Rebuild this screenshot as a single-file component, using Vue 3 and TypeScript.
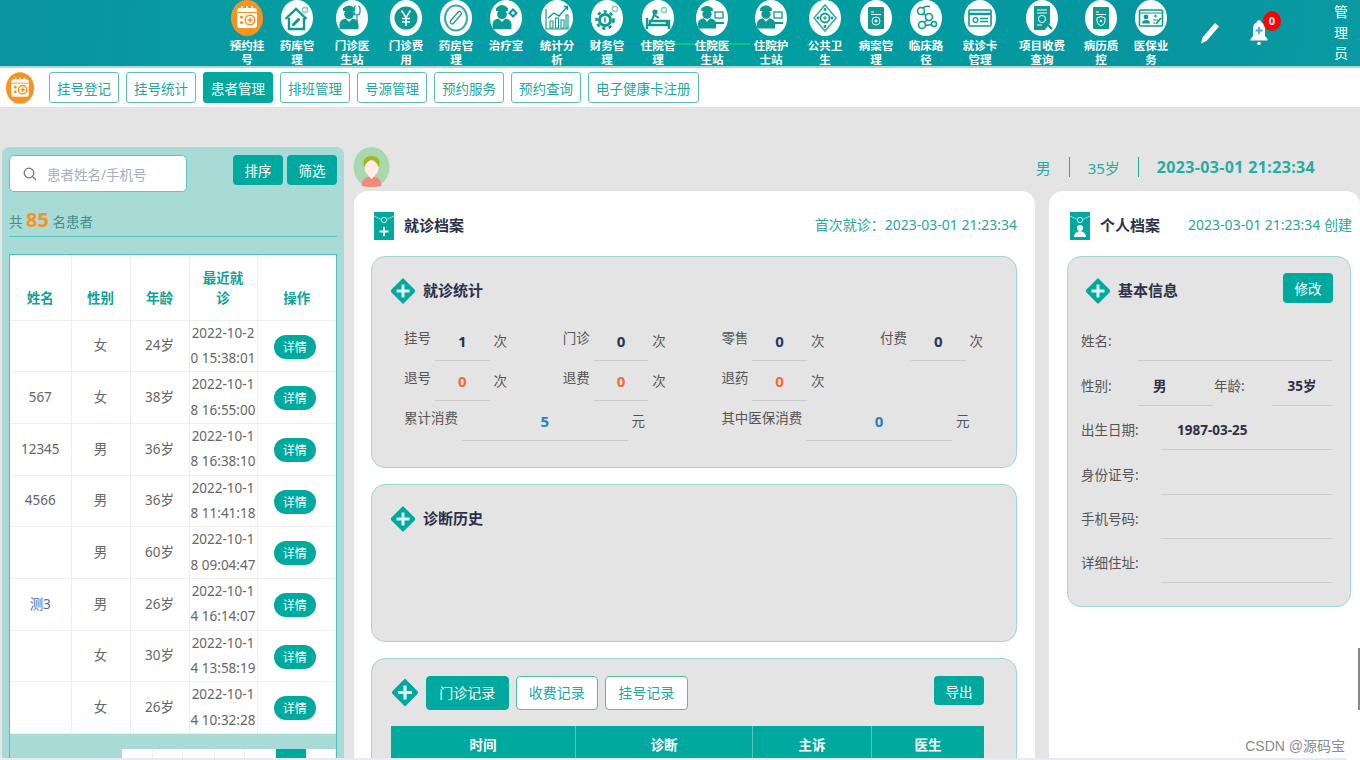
<script setup lang="ts">
const T = '#0b9a94'

// small building blocks for the round menu icons (viewBox 0 0 32 36)
const badge = (x: number, y: number, r = 3.4) =>
  `<circle cx="${x}" cy="${y}" r="${r}" fill="#8fd0cb"/><circle cx="${x}" cy="${y}" r="${r - 1.6}" fill="#fff"/>`
const staff = (x: number, y: number, k = 1.35, nurse = false) =>
  `<g transform="translate(${x} ${y}) scale(${k})" fill="${T}">` +
  `<path d="M-4.500 -2q4.500 -${nurse ? 5 : 4} 9 0v2h-9z"/>` +
  `<circle cx="0" cy="2.400" r="3.600"/>` +
  `<path d="M-7 13.500v-3.500q0 -3.600 4.500 -4.400l2.500 2.600 2.500 -2.600q4.500 .8 4.500 4.400v3.500z"/></g>`
const monitor = (x: number, y: number) =>
  `<rect x="${x}" y="${y}" width="8" height="6" fill="none" stroke="${T}" stroke-width="1.300"/><path d="M${x - 3} ${y + 10}h12v2h-12z" fill="${T}"/>`
const bookCard = (inner: string) =>
  `<rect x="8" y="7" width="16" height="22" rx="1" fill="${T}"/><path d="M11 12h3M11 14.500h10" stroke="#fff" stroke-width="1"/>` + inner

const menu = [
  { label: '预约挂号', shift: 0, active: true, svg: `<rect x="6" y="8" width="20" height="20" rx="3" fill="#fff"/><path d="M11 6v4M16 6v4M21 6v4" stroke="#fff" stroke-width="1.600"/><path d="M6 12.500h20" stroke="#f7931e" stroke-width="1"/><circle cx="10.500" cy="17" r="1.600" fill="#f7931e"/><circle cx="10.500" cy="22.500" r="1.600" fill="#f7931e"/><circle cx="19" cy="20" r="4.800" fill="none" stroke="#f7931e" stroke-width="1.600"/><path d="M19 17.500v5M16.500 20h5" stroke="#f7931e" stroke-width="1.500"/>` },
  { label: '药库管理', shift: 0, svg: `<path d="M4.500 19L15 9l10.500 10M8 18v11h15V18" fill="none" stroke="${T}" stroke-width="2.400"/><path d="M12.500 24.500l5 -5" stroke="${T}" stroke-width="3" stroke-linecap="round"/>` + badge(24, 10) },
  { label: '门诊医生站', shift: 5, svg: staff(13, 11, 1.35) + `<path d="M20 6q-2 0 -2 3v3q0 3 3 3t3 -3V9q0 -3 -2 -3M21 15v6q0 2 -2 2" fill="none" stroke="${T}" stroke-width="1.200"/>` },
  { label: '门诊费用', shift: 4, svg: `<circle cx="16" cy="18" r="11.500" fill="${T}"/><path d="M11.500 10.500l4.500 7 4.500 -7M16 17.500V26M12 18.500h8M12 22h8" fill="none" stroke="#fff" stroke-width="1.500"/>` },
  { label: '药房管理', shift: 0, svg: `<ellipse cx="16" cy="18" rx="11" ry="12.500" fill="none" stroke="#35aea8" stroke-width="2"/><path d="M12 22l7.500 -8.500" stroke="${T}" stroke-width="5" stroke-linecap="round"/><path d="M12 22l7.500 -8.500" stroke="#fff" stroke-width="2.600" stroke-linecap="round"/>` },
  { label: '治疗室', shift: 0, svg: staff(12, 11, 1.35, true) + `<path d="M23 8l5 5 -5 5 -5 -5z" fill="${T}"/><path d="M23 11v4M21 13h4" stroke="#fff" stroke-width="1"/>` },
  { label: '统计分析', shift: 1, svg: `<path d="M5 9v20h23" fill="none" stroke="${T}" stroke-width="1.200"/><path d="M9 21h3v7H9zM14.500 18h3v10h-3zM20 20h3v8h-3zM25 15h2v13h-2z" fill="none" stroke="${T}" stroke-width="1.100"/><path d="M7 18l6 -5 5 3 8 -9M23 6.500h3.500V10" fill="none" stroke="${T}" stroke-width="1.400"/>` },
  { label: '财务管理', shift: 0, svg: `<circle cx="14" cy="20" r="5.500" fill="none" stroke="${T}" stroke-width="3"/><circle cx="14" cy="20" r="8.500" fill="none" stroke="${T}" stroke-width="2.600" stroke-dasharray="3.200 3.200"/><path d="M14 17.500v5" stroke="${T}" stroke-width="1.500"/>` + badge(24, 9) },
  { label: '住院管理', shift: 1, svg: `<path d="M5 18v11M27 20v9M5 25h22M8 25v-4h17v4" fill="none" stroke="${T}" stroke-width="2.400"/><circle cx="13" cy="12" r="2.600" fill="${T}"/><path d="M10 20l2 -5 5 3" fill="none" stroke="${T}" stroke-width="2"/>` + badge(22, 10) },
  { label: '住院医生站', shift: 4, svg: staff(11, 11, 1.3) + monitor(19, 12) },
  { label: '住院护士站', shift: 9, svg: staff(11, 11, 1.3, true) + monitor(19, 12) },
  { label: '公共卫生', shift: 4, svg: `<path d="M16 5l11 13 -11 13L5 18z" fill="none" stroke="#35aea8" stroke-width="1.600"/><circle cx="16" cy="18" r="4.500" fill="none" stroke="${T}" stroke-width="1.800"/><path d="M16 16v4M14 18h4" stroke="${T}" stroke-width="1.100"/><circle cx="16" cy="9.500" r="1.400" fill="${T}"/><circle cx="16" cy="26.500" r="1.400" fill="${T}"/><circle cx="9" cy="18" r="1.400" fill="${T}"/><circle cx="23" cy="18" r="1.400" fill="${T}"/>` },
  { label: '病案管理', shift: 1, svg: bookCard(`<circle cx="16" cy="21" r="4" fill="none" stroke="#fff" stroke-width="1"/><circle cx="16" cy="21" r="1.600" fill="#fff"/>`) },
  { label: '临床路径', shift: 0, svg: `<circle cx="11" cy="11" r="3.500" fill="none" stroke="${T}" stroke-width="1.600"/><circle cx="19" cy="17" r="3.500" fill="none" stroke="${T}" stroke-width="1.600"/><circle cx="12" cy="25" r="3.500" fill="none" stroke="${T}" stroke-width="1.600"/><circle cx="24" cy="24" r="2.500" fill="none" stroke="${T}" stroke-width="1.600"/><path d="M13 14l3 1M17 20l-3 2.500M15.500 25.500l6 -1M20 6.500q-6 -1 -7 2" fill="none" stroke="${T}" stroke-width="1.600"/>` },
  { label: '就诊卡管理', shift: 4, svg: `<rect x="5" y="10" width="22" height="16" rx="1" fill="none" stroke="${T}" stroke-width="1.600"/><path d="M5 14h22" stroke="${T}" stroke-width="2.400"/><circle cx="11.500" cy="20" r="2.400" fill="none" stroke="${T}" stroke-width="1.300"/><path d="M16 18.500h8M16 21.500h8" stroke="${T}" stroke-width="1.300"/>` },
  { label: '项目收费查询', shift: 12, wide: true, svg: `<path d="M8 6h16v17l-5 7H8z" fill="${T}"/><path d="M11 10h10M11 13h10M11 25h5" stroke="#fff" stroke-width="1"/><circle cx="16" cy="19" r="3.600" fill="none" stroke="#fff" stroke-width="1"/><path d="M19 22l7 7" stroke="${T}" stroke-width="2.400"/>` },
  { label: '病历质控', shift: 9, svg: bookCard(`<path d="M16 16.500l4 1.500v3q0 3 -4 5 -4 -2 -4 -5v-3z" fill="none" stroke="#fff" stroke-width="1"/><circle cx="16" cy="21" r="1.300" fill="#fff"/>`) },
  { label: '医保业务', shift: 0, svg: `<rect x="4.500" y="10" width="23" height="16" rx="1" fill="none" stroke="${T}" stroke-width="1.600"/><path d="M4.500 13h23" stroke="${T}" stroke-width="1.200"/><circle cx="11" cy="17" r="2.400" fill="${T}"/><path d="M7 23.500q0 -3.500 4 -3.500t4 3.500z" fill="${T}"/><path d="M19 16h3M20.500 14.500v3M18 20h5M18 23h2" stroke="${T}" stroke-width="1.100"/><path d="M21 24l5 -6" stroke="${T}" stroke-width="1.800"/>` },
]

const tabs = ['挂号登记', '挂号统计', '患者管理', '排班管理', '号源管理', '预约服务', '预约查询', '电子健康卡注册']

const patients = [
  { name: '', sex: '女', age: '24岁', date: '2022-10-20 15:38:01' },
  { name: '567', sex: '女', age: '38岁', date: '2022-10-18 16:55:00' },
  { name: '12345', sex: '男', age: '36岁', date: '2022-10-18 16:38:10' },
  { name: '4566', sex: '男', age: '36岁', date: '2022-10-18 11:41:18' },
  { name: '', sex: '男', age: '60岁', date: '2022-10-18 09:04:47' },
  { name: '测3', sex: '男', age: '26岁', date: '2022-10-14 16:14:07' },
  { name: '', sex: '女', age: '30岁', date: '2022-10-14 13:58:19' },
  { name: '', sex: '女', age: '26岁', date: '2022-10-14 10:32:28' },
]

const statRows = [
  [
    { label: '挂号', value: '1', tone: 'dark' },
    { label: '门诊', value: '0', tone: 'navy' },
    { label: '零售', value: '0', tone: 'navy' },
    { label: '付费', value: '0', tone: 'navy' },
  ],
  [
    { label: '退号', value: '0', tone: 'red' },
    { label: '退费', value: '0', tone: 'red' },
    { label: '退药', value: '0', tone: 'red' },
  ],
]

const pager = [31, 30, 32, 30, 31, 31, 29]
const recordCols = ['时间', '诊断', '主诉', '医生']
</script>

<template>
  <div class="page">
    <header class="topbar">
      <svg class="pulse" width="1360" height="66" viewBox="0 0 1360 66">
        <path d="M385 44H478L488 48L492 44H505L511 46L518 29L528 66L542 36L552 44H640" fill="none" stroke="#2f78d6" stroke-width="1" />
        <path d="M640 44H750" fill="none" stroke="#22c96f" stroke-width="1.400" />
      </svg>
      <nav class="menu">
        <div
          v-for="m in menu"
          :key="m.label"
          class="menu-item"
          :style="{ marginLeft: m.shift + 'px' }"
        >
          <!-- Trusted, hand-written SVG markup. -->
          <svg class="menu-icon" :class="{ on: m.active }" viewBox="0 0 32 36" v-html="m.svg" />
          <span class="menu-label" :class="{ wide: m.wide }">{{ m.label }}</span>
        </div>
      </nav>
      <div class="tools">
        <svg class="pen" width="22" height="24" viewBox="0 0 22 24">
          <path d="M16 2l4 3.500L7.500 20 2 22.500l1.500 -6z" fill="#fff" />
        </svg>
        <div class="bell">
          <svg width="20" height="30" viewBox="0 0 20 30">
            <path d="M10 2q2 0 2.500 2.500Q16 6 16 11v7l2.500 3v1.500h-17V21L4 18v-7q0 -5 3.500 -6.500Q8 2 10 2z" fill="#fff" />
            <circle cx="10" cy="25.500" r="1.800" fill="#fff" />
            <path d="M10 9v7M6.500 12.500h7" stroke="#3fa9f5" stroke-width="1.800" />
          </svg>
          <span class="dot">0</span>
        </div>
        <div class="user">管理员</div>
      </div>
    </header>

    <div class="subnav">
      <svg class="sub-logo" viewBox="0 0 32 36">
        <ellipse cx="16" cy="18" rx="16" ry="18" fill="#f7931e" />
        <rect x="6" y="8" width="20" height="20" rx="3" fill="#fff" />
        <path d="M11 6v4M16 6v4M21 6v4" stroke="#fff" stroke-width="1.600" />
        <path d="M6 12.500h20" stroke="#f7931e" />
        <circle cx="10.500" cy="17" r="1.600" fill="#f7931e" />
        <circle cx="10.500" cy="22.500" r="1.600" fill="#f7931e" />
        <circle cx="19" cy="20" r="4.800" fill="none" stroke="#f7931e" stroke-width="1.600" />
        <path d="M19 17.500v5M16.500 20h5" stroke="#f7931e" stroke-width="1.500" />
      </svg>
      <button v-for="t in tabs" :key="t" class="tab" :class="{ on: t === '患者管理' }">{{ t }}</button>
    </div>

    <main class="main">
      <aside class="side">
        <div class="side-top">
          <div class="search">
            <svg width="16" height="16" viewBox="0 0 16 16">
              <circle cx="7" cy="7" r="4.800" fill="none" stroke="#777" stroke-width="1.300" />
              <path d="M10.500 10.500l3.500 3.500" stroke="#777" stroke-width="1.300" />
            </svg>
            <span>患者姓名/手机号</span>
          </div>
          <button class="btn side-btn">排序</button>
          <button class="btn side-btn">筛选</button>
        </div>
        <div class="count">共 <b>85</b> 名患者</div>
        <div class="table-wrap">
          <table class="ptable">
            <colgroup>
              <col style="width: 61px" /><col style="width: 59px" /><col style="width: 59px" /><col style="width: 68px" /><col />
            </colgroup>
            <thead>
              <tr>
                <th>姓名</th><th>性别</th><th>年龄</th><th>最近就诊</th><th>操作</th>
              </tr>
            </thead>
            <tbody>
              <tr v-for="(p, i) in patients" :key="i">
                <td :class="{ blue: p.name === '测3' }">{{ p.name }}</td>
                <td>{{ p.sex }}</td>
                <td>{{ p.age }}</td>
                <td class="date">{{ p.date }}</td>
                <td><button class="detail">详情</button></td>
              </tr>
            </tbody>
          </table>
          <div class="pager">
            <span
              v-for="(w, i) in pager"
              :key="i"
              class="pg"
              :class="{ on: i === 5 }"
              :style="{ width: w + 'px' }"
            />
          </div>
        </div>
      </aside>

      <section class="content">
        <div class="patient-bar">
          <svg class="avatar" viewBox="0 0 36 40">
            <ellipse cx="18" cy="20" rx="18" ry="20" fill="#a9d8ae" />
            <path d="M8 39q0 -9 10 -10 10 1 10 10 -5 1 -10 1t-10 -1z" fill="#f28a7c" />
            <path d="M14 28h8l-4 4z" fill="#fdf3e7" />
            <ellipse cx="18" cy="21" rx="7" ry="8" fill="#fdecea" />
            <path d="M10 16q0 -7 8 -7t8 7q0 3 -1 4 -2 -6 -7 -7 -5 1 -7 7 -1 -1 -1 -4z" fill="#a3b81c" />
          </svg>
          <div class="patient-info">
            <span>男</span><i />
            <span>35岁</span><i />
            <b>2023-03-01 21:23:34</b>
          </div>
        </div>

        <div class="panels">
          <section class="panel visit">
            <div class="panel-head">
              <svg class="folder" width="20" height="28" viewBox="0 0 20 28">
                <rect width="20" height="28" fill="#00a99d" />
                <path d="M0 4l7.500 3.500M20 4l-7.500 3.500" stroke="#bfe9e5" stroke-width=".8" />
                <circle cx="10" cy="8" r="2.700" fill="none" stroke="#dff5f3" stroke-width=".9" />
                <path d="M10 15v9M5.500 19.500h9" stroke="#fff" stroke-width="2" />
              </svg>
              <h2>就诊档案</h2>
              <span class="head-note">首次就诊：2023-03-01 21:23:34</span>
            </div>

            <div class="card stats-card">
              <div class="card-title">
                <svg class="diamond" viewBox="0 0 26 28">
                  <path d="M13 1l11.500 11.500q1.500 1.500 0 3L13 27 1.500 15.500q-1.500 -1.500 0 -3z" fill="#00a99d" />
                  <path d="M13 7.500v13M6.500 14h13" stroke="#dff5f3" stroke-width="3" />
                </svg>
                <h3>就诊统计</h3>
              </div>
              <div v-for="(row, r) in statRows" :key="r" class="stat-row">
                <div v-for="s in row" :key="s.label" class="stat">
                  <label>{{ s.label }}</label>
                  <strong :class="s.tone">{{ s.value }}</strong>
                  <em>次</em>
                </div>
              </div>
              <div class="stat-row money">
                <div class="stat total">
                  <label>累计消费</label>
                  <strong class="sky">5</strong>
                  <em>元</em>
                </div>
                <div class="stat insure">
                  <label>其中医保消费</label>
                  <strong class="sky">0</strong>
                  <em>元</em>
                </div>
              </div>
            </div>

            <div class="card history-card">
              <div class="card-title">
                <svg class="diamond" viewBox="0 0 26 28">
                  <path d="M13 1l11.500 11.500q1.500 1.500 0 3L13 27 1.500 15.500q-1.500 -1.500 0 -3z" fill="#00a99d" />
                  <path d="M13 7.500v13M6.500 14h13" stroke="#dff5f3" stroke-width="3" />
                </svg>
                <h3>诊断历史</h3>
              </div>
            </div>

            <div class="card record-card">
              <div class="record-head">
                <svg class="diamond" viewBox="0 0 26 28">
                  <path d="M13 1l11.500 11.500q1.500 1.500 0 3L13 27 1.500 15.500q-1.500 -1.500 0 -3z" fill="#00a99d" />
                  <path d="M13 7.500v13M6.500 14h13" stroke="#dff5f3" stroke-width="3" />
                </svg>
                <button class="rec-tab on">门诊记录</button>
                <button class="rec-tab">收费记录</button>
                <button class="rec-tab">挂号记录</button>
                <button class="btn export">导出</button>
              </div>
              <div class="rec-table">
                <div v-for="c in recordCols" :key="c">{{ c }}</div>
              </div>
            </div>
          </section>

          <section class="panel person">
            <div class="panel-head">
              <svg class="folder" width="20" height="28" viewBox="0 0 20 28">
                <rect width="20" height="28" fill="#00a99d" />
                <path d="M0 4l7.500 3.500M20 4l-7.500 3.500" stroke="#bfe9e5" stroke-width=".8" />
                <circle cx="10" cy="8" r="2.700" fill="none" stroke="#dff5f3" stroke-width=".9" />
                <circle cx="10" cy="16" r="3" fill="#fff" />
                <path d="M4 25q0 -5 6 -6 6 1 6 6z" fill="#fff" />
              </svg>
              <h2>个人档案</h2>
              <span class="head-note">2023-03-01 21:23:34 创建</span>
            </div>

            <div class="card basic-card">
              <div class="card-title">
                <svg class="diamond" viewBox="0 0 26 28">
                  <path d="M13 1l11.500 11.500q1.500 1.500 0 3L13 27 1.500 15.500q-1.500 -1.500 0 -3z" fill="#00a99d" />
                  <path d="M13 7.500v13M6.500 14h13" stroke="#dff5f3" stroke-width="3" />
                </svg>
                <h3>基本信息</h3>
                <button class="btn edit">修改</button>
              </div>
              <div class="field">
                <label class="short">姓名:</label><span class="val" />
              </div>
              <div class="field">
                <label class="short">性别:</label><span class="val sex">男</span>
                <label class="age-label">年龄:</label><span class="val age">35岁</span>
              </div>
              <div class="field">
                <label>出生日期:</label><span class="val birth">1987-03-25</span>
              </div>
              <div class="field"><label>身份证号:</label><span class="val" /></div>
              <div class="field"><label>手机号码:</label><span class="val" /></div>
              <div class="field"><label>详细住址:</label><span class="val" /></div>
            </div>
          </section>
        </div>
      </section>
    </main>

    <div class="bottom-strip" />
    <div class="scroll-tick" />
    <div class="mark">CSDN @源码宝</div>
  </div>
</template>

<style>
html, body { margin: 0; background: #e4e4e4; overflow: hidden; }
</style>

<style scoped>
.page {
  position: relative;
  width: 1360px;
  height: 760px;
  overflow: hidden;
  background: #e4e4e4;
  font-family: "Noto Sans", "Noto Sans CJK SC", sans-serif;
  font-size: 13.500px;
  color: #555;
}
button { font-family: inherit; cursor: pointer; }
h2, h3 { margin: 0; }

.topbar {
  position: relative;
  display: flex;
  height: 66px;
  padding-left: 222px;
  background: linear-gradient(95deg, #0a93a0 0%, #05a0a4 28%, #009da1 60%, #07959f 85%, #099aa2 100%);
  border-bottom: 2px solid #a9dbd6;
  overflow: hidden;
}
.pulse { position: absolute; left: 0; top: 0; }
.menu { position: relative; display: flex; }
.menu-item {
  display: flex;
  flex-direction: column;
  align-items: center;
  width: 50px;
}
.menu-icon {
  flex: none;
  width: 32px;
  height: 36px;
  background: #fff;
  border-radius: 50%;
}
.menu-icon.on { background: #f7931e; }
.menu-label {
  width: 35px;
  margin-top: 3px;
  font-size: 11.500px;
  line-height: 14px;
  font-weight: 700;
  color: #fff;
  text-align: center;
}
.menu-label.wide { width: 47px; }

.tools { position: relative; display: flex; align-items: flex-start; }
.pen { margin: 21px 0 0 23px; }
.bell { position: relative; margin: 18px 0 0 28px; }
.dot {
  position: absolute;
  left: 14px;
  top: -7px;
  width: 18px;
  height: 20px;
  border-radius: 50%;
  background: #f00;
  color: #fff;
  font-size: 11px;
  font-weight: 700;
  line-height: 20px;
  text-align: center;
}
.user {
  width: 14px;
  margin: 2px 0 0 65px;
  color: #fff;
  font-size: 14px;
  line-height: 20.500px;
}

.subnav {
  display: flex;
  align-items: center;
  gap: 7px;
  height: 39px;
  padding-left: 6px;
  background: #fff;
}
.sub-logo { width: 28px; height: 32px; margin-right: 8px; }
.tab {
  height: 31px;
  padding: 0 7px;
  border: 1px solid #5cc0b8;
  border-radius: 3px;
  background: #fff;
  color: #26a69d;
  font-size: 13.500px;
  white-space: nowrap;
}
.tab.on { background: #00a99d; border-color: #00a99d; color: #fff; }

.main { display: flex; padding: 40px 0 0 2px; gap: 9px; }

.side {
  flex: none;
  box-sizing: border-box;
  width: 342px;
  height: 640px;
  padding: 8px 7px 0;
  background: #a9dbd6;
  border-radius: 8px 8px 0 0;
}
.side-top { display: flex; align-items: flex-start; gap: 4px; }
.search {
  display: flex;
  align-items: center;
  gap: 9px;
  box-sizing: border-box;
  width: 178px;
  height: 37px;
  margin-right: 42px;
  padding-left: 12px;
  background: #fff;
  border: 1px solid #5fc4bb;
  border-radius: 5px;
  color: #a6adbd;
}
.btn {
  border: 0;
  border-radius: 4px;
  background: #00a99d;
  color: #fff;
  font-size: 13.500px;
}
.side-btn { width: 50px; height: 30px; padding: 0; }
.count {
  height: 35px;
  margin-top: 10px;
  line-height: 35px;
  border-bottom: 1px solid #5fc4bb;
  color: #3f8f88;
  box-sizing: border-box;
}
.count b { color: #f7931e; font-size: 20px; }
.table-wrap {
  margin-top: 17px;
  border: 1px solid #4fbdb3;
  border-bottom: 0;
  height: 520px;
}
.ptable {
  width: 100%;
  table-layout: fixed;
  border-collapse: collapse;
  background: #fff;
}
.ptable th, .ptable td {
  padding: 0;
  border: 1px solid #eee;
  text-align: center;
  line-height: 25.350px;
}
.ptable th {
  height: 65px;
  padding: 0 10px 12px;
  box-sizing: border-box;
  line-height: 20px;
  vertical-align: bottom;
  color: #0fa197;
  font-weight: 700;
}
.ptable tr > :first-child { border-left: 0; }
.ptable tr > :last-child { border-right: 0; }
.ptable thead th { border-top: 0; }
.ptable td { color: #666; }
.ptable td.date { word-break: break-all; font-size: 13.500px; }
.ptable td.blue { color: #5b6b9e; }
.detail {
  width: 42px;
  height: 24px;
  margin-right: 4px;
  padding: 0;
  border: 0;
  border-radius: 12px;
  background: #00a99d;
  color: #fff;
  font-size: 12px;
  vertical-align: middle;
}
.pager { display: flex; margin: 15px 0 0 112px; }
.pg { height: 30px; background: #fff; border-right: 1px solid #eee; box-sizing: border-box; }
.pg.on { background: #00a99d; }

.content { flex: none; width: 1007px; }
.patient-bar {
  display: flex;
  justify-content: space-between;
  align-items: flex-start;
  height: 44px;
}
.avatar { width: 37px; height: 40px; }
.patient-info {
  display: flex;
  align-items: center;
  gap: 18px;
  margin: 9px 45px 0 0;
  color: #26ada3;
  font-size: 15px;
}
.patient-info i { width: 1px; height: 20px; background: #26ada3; }
.patient-info b { font-size: 16px; letter-spacing: .35px; }

.panels { display: flex; gap: 14px; padding-left: 1px; }
.panel {
  flex: none;
  box-sizing: border-box;
  height: 620px;
  background: #fff;
  border-radius: 14px 14px 0 0;
}
.visit { width: 681px; padding: 21px 18px 0 17px; }
.person { width: 311px; padding: 21px 9px 0 18px; }
.panel-head { display: flex; align-items: center; height: 28px; margin-bottom: 16px; padding-left: 3px; }
.panel-head h2 { margin: 0 0 4px 10px; font-size: 15px; font-weight: 700; color: #2c3048; }
.head-note { margin: 0 0 4px auto; color: #26a69d; font-size: 14px; white-space: nowrap; }
.person .head-note { margin-right: -1px; }

.card {
  box-sizing: border-box;
  background: #e4e4e4;
  border: 1px solid #9ad9d2;
  border-radius: 14px;
}
.stats-card { height: 212px; padding: 20px 18px 0; }
.history-card { height: 158px; margin-top: 16px; padding: 20px 18px 0; }
.record-card { height: 140px; margin-top: 16px; padding: 17px 32px 0 19px; border-radius: 14px 14px 0 0; }
.card-title { display: flex; align-items: center; height: 28px; margin-bottom: 17px; }
.card-title h3 { margin: 0 0 4px 7px; font-size: 15px; font-weight: 700; color: #2c3048; }
.diamond { flex: none; width: 26px; height: 28px; }

.stat-row { display: grid; grid-template-columns: repeat(4, 158.700px); height: 40px; padding-left: 14px; }
.stat { display: flex; width: 103px; height: 40px; }
.stat label { line-height: 32px; white-space: nowrap; }
.stat strong {
  flex: 1;
  box-sizing: border-box;
  height: 39px;
  margin: 0 4px;
  border-bottom: 1px solid #ccc;
  font-size: 15px;
  line-height: 38px;
  text-align: center;
}
.stat em { font-style: normal; line-height: 38px; }
.dark { color: #2c3048; }
.navy { color: #26385f; }
.red { color: #f4693a; }
.sky { color: #2a7fc4; }
.stat.total { grid-column: span 2; width: 241px; }
.stat.insure { grid-column: span 2; width: 248px; }

.record-head { display: flex; align-items: flex-start; gap: 7px; }
.record-head .diamond { width: 28px; height: 33px; }
.rec-tab {
  width: 82.500px;
  height: 34px;
  padding: 0 0 2px;
  border: 1px solid #4fbdb3;
  border-radius: 4px;
  background: #fff;
  color: #26a69d;
  font-size: 14px;
}
.rec-tab.on { background: #00a99d; border-color: #00a99d; color: #fff; }
.export { width: 50px; height: 29px; margin-left: auto; padding: 0; }
.rec-table {
  display: grid;
  grid-template-columns: 184px 177px 119px 113px;
  margin-top: 16px;
  background: #00a99d;
}
.rec-table div {
  height: 40px;
  border-left: 1px solid #5fc4bb;
  color: #fff;
  font-weight: 700;
  line-height: 38px;
  text-align: center;
}
.rec-table div:first-child { border-left: 0; }

.basic-card { width: 284px; height: 351px; padding: 20px 18px 0 13px; }
.basic-card .card-title { margin: 0 0 12px 4px; }
.edit { width: 50px; height: 30px; margin: 0 -1px 0 auto; padding: 0; position: relative; top: -3px; }
.field { display: flex; align-items: flex-end; height: 44.400px; }
.field label { width: 80px; flex: none; line-height: 40px; white-space: nowrap; }
.field label.short { width: 57px; }
.field .val {
  flex: 1;
  box-sizing: border-box;
  height: 40px;
  border-bottom: 1px solid #ccc;
  color: #2c3048;
  font-weight: 700;
  line-height: 40px;
}
.val.sex { flex: none; width: 75px; padding-left: 15px; }
.field label.age-label { width: 58px; margin-left: 1px; }
.val.age { text-align: center; }
.val.birth { padding-left: 16px; }

.bottom-strip { position: absolute; left: 0; bottom: 0; width: 1347px; height: 2px; background: #e8eaf4; }
.scroll-tick { position: absolute; right: 0; top: 648px; width: 2px; height: 62px; background: #888; }
.mark { position: absolute; right: 15px; top: 735px; color: #8a8a8a; font-family: "Liberation Sans", "Noto Sans CJK SC", sans-serif; font-size: 14px; }
</style>
